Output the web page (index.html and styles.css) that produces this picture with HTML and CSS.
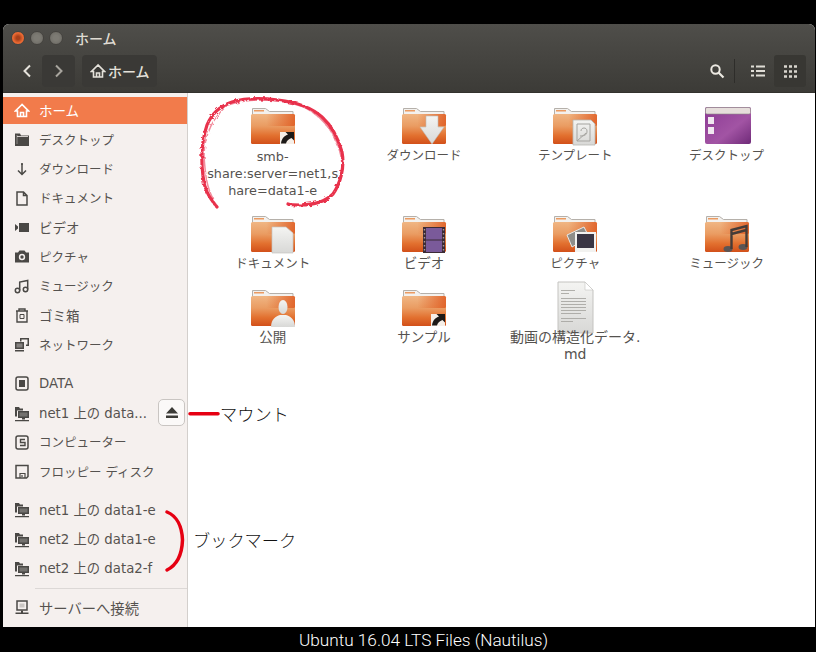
FILE: index.html
```html
<!DOCTYPE html>
<html lang="ja">
<head>
<meta charset="utf-8">
<title>ホーム</title>
<link rel="stylesheet" href="styles.css">
</head>
<body>
<svg class="defs" width="0" height="0" aria-hidden="true">
  <defs>
    <filter id="rough" x="-5%" y="-5%" width="110%" height="110%">
      <feTurbulence type="fractalNoise" baseFrequency=".3" numOctaves="2" seed="4"/>
      <feDisplacementMap in="SourceGraphic" scale="3.500"/>
    </filter>
    <linearGradient id="fbody" x1="0" y1="0" x2="0" y2="1">
      <stop offset="0" stop-color="#f0b684"/>
      <stop offset=".4" stop-color="#ea9c62"/>
      <stop offset=".72" stop-color="#e2702f"/>
      <stop offset="1" stop-color="#d2501a"/>
    </linearGradient>
    <linearGradient id="fside" x1="0" y1="0" x2="1" y2="0">
      <stop offset=".35" stop-color="#df5a20" stop-opacity="0"/>
      <stop offset="1" stop-color="#df5a20" stop-opacity=".85"/>
    </linearGradient>
    <linearGradient id="purple" x1="0" y1="0" x2="1" y2="1">
      <stop offset="0" stop-color="#8c3a94"/>
      <stop offset=".6" stop-color="#a254a4"/>
      <stop offset="1" stop-color="#6f2a78"/>
    </linearGradient>
    <linearGradient id="paper" x1="0" y1="0" x2="0" y2="1">
      <stop offset="0" stop-color="#f4f4f2"/>
      <stop offset="1" stop-color="#d8d8d6"/>
    </linearGradient>
    <symbol id="folder" viewBox="0 0 48 40">
      <path d="M3.500 2.500h13l4 3h23.500v6h-40.500z" fill="#f3f1ee" stroke="#b5b0aa"/>
      <rect x="5" y="4" width="10" height="1.500" fill="#eb9a60"/>
      <rect x="2" y="8" width="44" height="30" rx="1.500" fill="url(#fbody)"/>
      <rect x="2" y="8" width="44" height="12" rx="1.500" fill="url(#fside)"/>
    </symbol>
    <symbol id="link" viewBox="0 0 48 40">
      <rect x="31" y="26" width="14" height="12" fill="#f6efe8"/>
      <path d="M32 37.500c.5-5 3.500-8 7-9l-2.500-2.500H45v8.500l-2.500-2.500c-3 1-5 3-5.500 5.500z" fill="#1d1a18"/>
    </symbol>
    <symbol id="i-home" viewBox="0 0 16 16"><path d="M8 2 1.500 8.500H3.500V14h9V8.500h2L8 2zM6.500 14V10h3v4" fill="none" stroke="currentColor" stroke-width="1.600"/></symbol>
    <symbol id="i-folder" viewBox="0 0 16 16"><path d="M1 2h5l1 2h8v10.500H1z" fill="currentColor"/><path d="M3 3.500v9" stroke="#f5f0ee" stroke-width=".8" opacity=".5"/><path d="M3 5h11" stroke="#f5f0ee" stroke-width=".8"/></symbol>
    <symbol id="i-down" viewBox="0 0 16 16"><path d="M8 2v10M4 9l4 4 4-4" fill="none" stroke="currentColor" stroke-width="1.500"/><circle cx="8" cy="2.500" r="1" fill="currentColor"/></symbol>
    <symbol id="i-doc" viewBox="0 0 16 16"><path d="M3 1.500h6.500L13 5v9.500H3zM9.500 1.500V5H13" fill="none" stroke="currentColor" stroke-width="1.500"/></symbol>
    <symbol id="i-video" viewBox="0 0 16 16"><rect x="5" y="3.500" width="10" height="9" fill="currentColor"/><path d="M1 4.500v7l3-2.500V7z" fill="currentColor"/></symbol>
    <symbol id="i-camera" viewBox="0 0 16 16"><path d="M1 4h3l1.500-2h5L12 4h3v10H1z" fill="currentColor"/><circle cx="8" cy="8.500" r="3.200" fill="#f5f0ee"/><circle cx="8" cy="8.500" r="1.700" fill="currentColor"/></symbol>
    <symbol id="i-music" viewBox="0 0 16 16"><g fill="none" stroke="currentColor" stroke-width="1.500"><circle cx="3.500" cy="12" r="2.200"/><circle cx="11.500" cy="11" r="2.200"/><path d="M5.700 12V3.500l8-1.500v9"/></g></symbol>
    <symbol id="i-trash" viewBox="0 0 16 16"><g fill="none" stroke="currentColor" stroke-width="1.400"><path d="M2 3.500h12M5 3.500V1.500h6v2M3 3.500v11h10v-11"/><path d="M6 7h4v4H6z" stroke-width="1"/></g></symbol>
    <symbol id="i-net" viewBox="0 0 16 16"><g fill="currentColor"><path d="M6 1.500h9v8h-3V8h1.500V3h-6v2H6z"/><rect x="1" y="5.500" width="9" height="7"/><rect x="1" y="13.500" width="9" height="1.500"/></g><rect x="2.500" y="7" width="6" height="4" fill="#f5f0ee" opacity=".35"/></symbol>
    <symbol id="i-drive" viewBox="0 0 16 16"><rect x="2" y="1.500" width="12" height="13" rx="2" fill="none" stroke="currentColor" stroke-width="1.500"/><rect x="5" y="4.500" width="6" height="7" fill="currentColor"/></symbol>
    <symbol id="i-share" viewBox="0 0 16 16"><path d="M1 1.500h4l1 1.500h3V5H3v6H1z" fill="currentColor"/><rect x="4" y="5.500" width="11" height="7" fill="currentColor"/><rect x="5.500" y="7" width="8" height="4" fill="#f5f0ee" opacity=".25"/><path d="M8 12.500h3V14H8zM1 14.500h14V16H1z" fill="currentColor"/></symbol>
    <symbol id="i-comp" viewBox="0 0 16 16"><rect x="2" y="1.500" width="12" height="13" rx="2" fill="none" stroke="currentColor" stroke-width="1.500"/><path d="M11 5H6.500v3H11v3H6" fill="none" stroke="currentColor" stroke-width="1.400"/></symbol>
    <symbol id="i-floppy" viewBox="0 0 16 16"><path d="M2 2h12v11l-1.500 1.500H2z" fill="none" stroke="currentColor" stroke-width="1.500"/><path d="M6 14.500V10h5v4.500M8 11.500v2" fill="none" stroke="currentColor" stroke-width="1.200"/></symbol>
    <symbol id="i-server" viewBox="0 0 16 16"><rect x="3" y="1.500" width="10" height="9" fill="none" stroke="currentColor" stroke-width="1.500"/><rect x="5.500" y="4" width="5" height="4" fill="currentColor" opacity=".25"/><path d="M7 11h2v2H7zM1.500 13h13v1.500h-13z" fill="currentColor"/></symbol>
  </defs>
</svg>

<div class="window">
  <header class="titlebar">
    <div class="wm-buttons">
      <span class="wm close"></span>
      <span class="wm"></span>
      <span class="wm"></span>
    </div>
    <span class="title">ホーム</span>
  </header>

  <div class="toolbar">
    <div class="nav">
      <button class="nav-btn"><svg width="12" height="16" viewBox="0 0 12 16"><path d="M9 2.500 3.500 8 9 13.500" fill="none" stroke="#e6e3dc" stroke-width="2"/></svg></button>
      <button class="nav-btn dark"><svg width="12" height="16" viewBox="0 0 12 16"><path d="M3 2.500 8.500 8 3 13.500" fill="none" stroke="#a8a59e" stroke-width="2"/></svg></button>
    </div>
    <div class="crumb">
      <svg class="crumb-icon" width="16" height="16"><use href="#i-home"/></svg>
      <span>ホーム</span>
    </div>
    <div class="tools">
      <button class="tool"><svg width="16" height="16" viewBox="0 0 16 16"><circle cx="6.500" cy="6.500" r="4.200" fill="none" stroke="#ece9e2" stroke-width="2"/><path d="m9.500 9.500 5 5" stroke="#ece9e2" stroke-width="2.200"/></svg></button>
      <span class="tool-sep"></span>
      <button class="tool"><svg width="14" height="12" viewBox="0 0 14 12"><path d="M0 1.500h3M5 1.500h9M0 6h3M5 6h9M0 10.500h3M5 10.500h9" stroke="#e0ddd6" stroke-width="2.200"/></svg></button>
      <button class="tool pressed"><svg width="13" height="13" viewBox="0 0 13 13"><path d="M0 1.500h3M5 1.500h3M10 1.500h3M0 6.500h3M5 6.500h3M10 6.500h3M0 11.500h3M5 11.500h3M10 11.500h3" stroke="#d8d5ce" stroke-width="2.400"/></svg></button>
    </div>
  </div>

  <div class="main">
    <nav class="sidebar">
      <div class="group">
        <div class="row active"><svg class="ico"><use href="#i-home"/></svg><span class="wide">ホーム</span></div>
        <div class="row"><svg class="ico"><use href="#i-folder"/></svg><span>デスクトップ</span></div>
        <div class="row"><svg class="ico"><use href="#i-down"/></svg><span>ダウンロード</span></div>
        <div class="row"><svg class="ico"><use href="#i-doc"/></svg><span>ドキュメント</span></div>
        <div class="row"><svg class="ico"><use href="#i-video"/></svg><span class="wide">ビデオ</span></div>
        <div class="row"><svg class="ico"><use href="#i-camera"/></svg><span>ピクチャ</span></div>
        <div class="row"><svg class="ico"><use href="#i-music"/></svg><span>ミュージック</span></div>
        <div class="row"><svg class="ico"><use href="#i-trash"/></svg><span class="wide">ゴミ箱</span></div>
        <div class="row"><svg class="ico"><use href="#i-net"/></svg><span>ネットワーク</span></div>
      </div>
      <div class="group gap-a">
        <div class="row"><svg class="ico"><use href="#i-drive"/></svg><span class="lat">DATA</span></div>
        <div class="row"><svg class="ico"><use href="#i-share"/></svg><span class="lat">net1 上の data...</span>
          <button class="eject"><svg width="14" height="11" viewBox="0 0 14 11"><path d="M7 0l6 6.500H1zM1 8.500h12V11H1z" fill="#3c3b37"/></svg></button>
        </div>
        <div class="row"><svg class="ico"><use href="#i-comp"/></svg><span>コンピューター</span></div>
        <div class="row"><svg class="ico"><use href="#i-floppy"/></svg><span>フロッピー ディスク</span></div>
      </div>
      <div class="group gap-b">
        <div class="row"><svg class="ico"><use href="#i-share"/></svg><span class="lat">net1 上の data1-e</span></div>
        <div class="row"><svg class="ico"><use href="#i-share"/></svg><span class="lat">net2 上の data1-e</span></div>
        <div class="row"><svg class="ico"><use href="#i-share"/></svg><span class="lat">net2 上の data2-f</span></div>
      </div>
      <div class="side-sep"></div>
      <div class="row"><svg class="ico"><use href="#i-server"/></svg><span class="widest">サーバーへ接続</span></div>
    </nav>

    <section class="files">
      <div class="file">
        <svg class="thumb" viewBox="0 0 48 40"><use href="#folder"/><use href="#link"/></svg>
        <div class="name latin">smb-<br>share:server=net1,s<br>hare=data1-e</div>
      </div>
      <div class="file">
        <svg class="thumb" viewBox="0 0 48 40"><use href="#folder"/><path d="M26 10h12v11h6L32 38 20 21h6z" fill="url(#paper)" stroke="#bdbcb8" stroke-width=".6"/></svg>
        <div class="name">ダウンロード</div>
      </div>
      <div class="file">
        <svg class="thumb" viewBox="0 0 48 40"><use href="#folder"/><path d="M22 14h18l4 4v21H22z" fill="url(#paper)" stroke="#b8b7b3" stroke-width=".8"/><path d="M26 18h13v17H26z" fill="none" stroke="#a5a4a0"/><path d="M29 30c6 0 7-2 7-5 0-4-6-4-6 0M26 35l9-8" fill="none" stroke="#a5a4a0"/></svg>
        <div class="name">テンプレート</div>
      </div>
      <div class="file">
        <svg class="thumb" viewBox="0 0 48 40"><rect x="2" y="1" width="46" height="37" rx="2" fill="url(#purple)"/><rect x="2.500" y="1.500" width="45" height="6.500" rx="1.500" fill="#e6dedb" stroke="#8f8a86" stroke-width=".6"/><rect x="5" y="11" width="6" height="7" fill="#f0e8ef"/><rect x="5" y="21" width="6" height="7" fill="#f0e8ef"/></svg>
        <div class="name">デスクトップ</div>
      </div>

      <div class="file">
        <svg class="thumb" viewBox="0 0 48 40"><use href="#folder"/><path d="M23 13h14l7 6v20H23z" fill="url(#paper)" stroke="#c5c4c0" stroke-width=".7"/></svg>
        <div class="name">ドキュメント</div>
      </div>
      <div class="file">
        <svg class="thumb" viewBox="0 0 48 40"><use href="#folder"/><rect x="23" y="13" width="22" height="26" fill="#3b2b36"/><rect x="26" y="14" width="16" height="24" fill="#7a5a9a"/><path d="M24.500 15v22M43.500 15v22" stroke="#a99" stroke-width="1.400" stroke-dasharray="1.500 2.500"/><path d="M26 26h16" stroke="#3b2b36"/></svg>
        <div class="name wide">ビデオ</div>
      </div>
      <div class="file">
        <svg class="thumb" viewBox="0 0 48 40"><use href="#folder"/><path d="m16 21 17-8 5 10-17 10z" fill="#8f8e8a" stroke="#e8e8e6"/><rect x="24" y="18" width="21" height="20" fill="#f2f2f0"/><rect x="26" y="20" width="17" height="14" fill="#3a3644"/></svg>
        <div class="name">ピクチャ</div>
      </div>
      <div class="file">
        <svg class="thumb" viewBox="0 0 48 40"><use href="#folder"/><g fill="#5a5555"><ellipse cx="25" cy="35" rx="4.500" ry="3"/><ellipse cx="40" cy="33" rx="4.500" ry="3"/></g><path d="M28.500 35V16l15-4v21M28.500 20l15-4" fill="none" stroke="#453c38" stroke-width="2.400"/></svg>
        <div class="name">ミュージック</div>
      </div>

      <div class="file">
        <svg class="thumb" viewBox="0 0 48 40"><use href="#folder"/><ellipse cx="34" cy="19" rx="4.500" ry="7" fill="url(#paper)"/><path d="M22 39c0-8 5-11 9-12h6c4 1 9 4 9 12z" fill="url(#paper)"/></svg>
        <div class="name wide">公開</div>
      </div>
      <div class="file">
        <svg class="thumb" viewBox="0 0 48 40"><use href="#folder"/><use href="#link"/></svg>
        <div class="name wide">サンプル</div>
      </div>
      <div class="file">
        <svg class="thumb" viewBox="0 0 48 40">
          <g transform="translate(0 1.500)">
            <path d="M7-7.500h27l8 8v43H7z" fill="url(#paper)" stroke="#c4c3c0"/>
            <path d="M34-7.500v8h8z" fill="#fff" stroke="#c4c3c0" stroke-width=".6"/>
            <path d="M10 1h14M10 4h8M10 9h25M10 12h25M10 15h25M10 18h25M10 21h25M10 24h20M10 29h25M10 32h12" stroke="#a8a7a3" stroke-width=".9"/>
          </g>
        </svg>
        <div class="name widest">動画の構造化データ.<br>md</div>
      </div>
    </section>
  </div>
</div>

<footer class="caption">Ubuntu 16.04 LTS Files (Nautilus)</footer>

<svg class="ink" width="816" height="652" viewBox="0 0 816 652" aria-hidden="true">
  <g class="rough">
    <path class="ring" d="M217 207C208 196 204 188 203 176 201 160 202 140 207 125 212 113 220 106 232 102 245 98 262 98 278 100 296 102 312 108 322 117 332 126 338 138 342 152 345 168 340 184 333 194 325 202 312 205 300 205 295 205 291 205 288 204"/>
    <path class="ring thin" d="M214 200C206 188 205 170 204 156 204 134 214 116 228 105 250 97 280 99 304 107 326 118 340 140 342 164"/>
  </g>
  <path class="stroke" d="M190 413.700h28"/>
  <path class="stroke" d="M167 512C177 516 182 527 182.500 540 182 554 177 565 167 570"/>
</svg>
<span class="note mount">マウント</span>
<span class="note mark">ブックマーク</span>
</body>
</html>
```
FILE: styles.css
```css
* { box-sizing: border-box; }

html, body {
  margin: 0;
  height: 652px;
  background: #000;
  overflow: hidden;
}

body {
  position: relative;
  font-family: "DejaVu Sans", "Noto Sans CJK JP", sans-serif;
  font-size: 13px;
}

button {
  border: 0;
  padding: 0;
  background: none;
  display: flex;
  align-items: center;
  justify-content: center;
}

.defs { position: absolute; }

.window {
  margin: 24px 1px 0 3px;
  height: 603px;
  display: flex;
  flex-direction: column;
  border-radius: 6px 6px 0 0;
  overflow: hidden;
  background: #fff;
}

.titlebar {
  height: 28px;
  flex: none;
  display: flex;
  align-items: center;
  background: linear-gradient(#4f4e4a, #474642);
  padding-left: 8px;
}

.wm-buttons {
  display: flex;
  gap: 5px;
  width: 64px;
}

.wm {
  width: 14px;
  height: 14px;
  border-radius: 50%;
  background: radial-gradient(circle, #7d7b74 30%, #6a6862);
  border: 1px solid #45433f;
}

.wm.close {
  background: radial-gradient(circle, #a8401a 20%, #ec6a33 60%);
}

.title {
  color: #dfdbd2;
  font-size: 14px;
  font-weight: 500;
}

.toolbar {
  height: 41px;
  flex: none;
  display: flex;
  align-items: center;
  padding: 0 9px 2px 9px;
  background: linear-gradient(#474642, #3c3b37);
  border-bottom: 1px solid #33322e;
}

.nav {
  display: flex;
  margin-right: 7px;
}

.nav-btn {
  width: 30px;
  height: 32px;
  border-radius: 4px;
}

.nav-btn.dark {
  width: 33px;
  background: #3a3936;
}

.crumb {
  width: 75px;
  height: 32px;
  display: flex;
  align-items: center;
  gap: 2px;
  padding-left: 8px;
  border-radius: 4px;
  background: #3a3936;
  color: #e4e1da;
  font-size: 14px;
  font-weight: 500;
}

.tools {
  margin-left: auto;
  display: flex;
  align-items: center;
}

.tool {
  width: 32px;
  height: 32px;
  border-radius: 3px;
}

.tool.pressed {
  background: #383733;
}

.tool-sep {
  width: 1px;
  height: 24px;
  margin: 0 7px 0 1px;
  background: #2e2d2a;
}

.main {
  flex: 1;
  min-height: 0;
  display: flex;
}

.sidebar {
  width: 185px;
  flex: none;
  padding-top: 3px;
  background: #f5f0ee;
  border-right: 1px solid #d3cfcc;
  color: #55524f;
  font-size: 12.500px;
}

.row {
  height: 29.250px;
  display: flex;
  align-items: center;
  padding-left: 11px;
  padding-bottom: 1px;
  white-space: nowrap;
}

.row.active {
  background: #f27b4b padding-box;
  border-block: 1px solid transparent;
  color: #fff;
}

.row .ico { transform: translateY(.5px); }

.ico {
  width: 16px;
  height: 16px;
  flex: none;
  margin-right: 9px;
  color: #4a4845;
}

.active .ico { color: #fff; }

.wide { font-size: 13.500px; }
.widest { font-size: 14.300px; }
.lat { font-size: 13.300px; }

.gap-a { margin-top: 10px; }
.gap-b { margin-top: 9px; }

.side-sep {
  height: 1px;
  margin: 5px 0 4px 32px;
  background: #dcd8d6;
}

.eject {
  width: 27px;
  height: 27px;
  margin-left: auto;
  margin-right: 2px;
  border: 1px solid #c9c5c2;
  border-radius: 5px;
  background: #fbf9f8;
}

.files {
  flex: 1;
  min-width: 0;
  padding: 13px 0 0 9px;
  display: grid;
  grid-template-columns: repeat(4, 151.300px);
  grid-auto-rows: min-content;
  align-content: start;
  row-gap: 16px;
  background: #fff;
}

.file {
  display: flex;
  flex-direction: column;
  align-items: center;
}

.thumb {
  width: 48px;
  height: 40px;
  display: block;
  overflow: visible;
}

.name {
  margin-top: 1px;
  text-align: center;
  color: #55524f;
  font-size: 12.500px;
  line-height: 17px;
  white-space: nowrap;
}

.name.wide { font-size: 13.500px; }
.name.widest { font-size: 14px; }
.name.latin {
  margin-top: 2px;
  margin-bottom: -1px;
  font-size: 12.800px;
  line-height: 17px;
}

.caption {
  height: 25px;
  display: flex;
  align-items: center;
  justify-content: center;
  padding-left: 31px;
  color: #fff;
  font-family: "Roboto", "Liberation Sans", sans-serif;
  font-size: 17.200px;
  font-weight: 300;
}

.ink {
  position: absolute;
  left: 0;
  top: 0;
  pointer-events: none;
}

.rough { filter: url(#rough); }

.ring {
  fill: none;
  stroke: #e8304c;
  stroke-width: 3.200;
  stroke-linecap: round;
}

.ring.thin {
  stroke-width: 1.500;
  opacity: .55;
}

.stroke {
  fill: none;
  stroke: #e60012;
  stroke-width: 3.500;
  stroke-linecap: round;
}

.note {
  position: absolute;
  color: #111;
  font-family: "Noto Sans CJK JP", sans-serif;
  font-size: 17.200px;
  font-weight: 300;
  line-height: 24px;
  white-space: nowrap;
}

.mount { left: 220px; top: 402px; }
.mark { left: 193px; top: 528px; }
```
